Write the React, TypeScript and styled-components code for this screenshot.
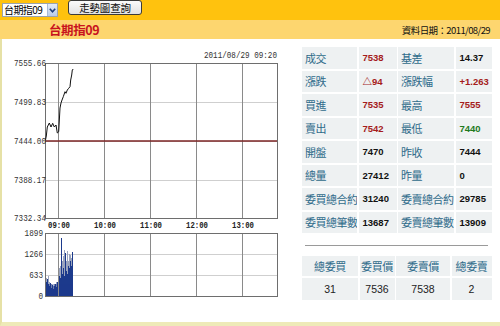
import React from 'react';
import styled, { createGlobalStyle } from 'styled-components';

const GlobalStyle = createGlobalStyle`
  html, body {
    margin: 0;
    padding: 0;
    background: #fff;
  }
  body {
    font-family: 'Noto Sans CJK TC', sans-serif;
  }
`;

const Page = styled.div`
  width: 500px;
  height: 326px;
  overflow: hidden;
  display: flex;
  flex-direction: column;
`;

const TopBar = styled.div`
  height: 20px;
  flex: none;
  background: #ffc20e;
  display: flex;
  align-items: flex-start;
  padding-left: 2px;
  gap: 10px;
`;

const Select = styled.div`
  margin-top: 3px;
  width: 56px;
  height: 14px;
  display: flex;
  align-items: stretch;
  background: #fff;
  border: 1px solid #9aa3ad;
  box-sizing: border-box;
`;

const SelectText = styled.span`
  flex: 1;
  min-width: 0;
  font-family: 'Noto Sans CJK TC', sans-serif;
  font-size: 10px;
  line-height: 12px;
  padding-left: 1px;
  color: #000;
  white-space: nowrap;
  letter-spacing: -0.6px;
`;

const SelectArrow = styled.span`
  width: 9px;
  flex: none;
  display: flex;
  align-items: center;
  justify-content: center;
  background: linear-gradient(#e3ecf8, #b9cbe6);
  border-left: 1px solid #a9b9d3;
`;

const QueryButton = styled.div`
  width: 74px;
  height: 15px;
  box-sizing: border-box;
  border: 1px solid #3b3b3b;
  border-radius: 3px;
  background: linear-gradient(#fbfbfb, #e2e2e2);
  display: flex;
  align-items: center;
  justify-content: center;
  font-size: 10.5px;
  color: #111;
  letter-spacing: -0.2px;
`;

const TitleBar = styled.div`
  height: 19px;
  flex: none;
  background: #fdd66f;
  display: flex;
  align-items: center;
  justify-content: space-between;
`;

const Title = styled.div`
  margin-left: 49px;
  font-size: 12.5px;
  font-weight: 700;
  color: #c8141e;
  letter-spacing: -0.4px;
`;

const DataDate = styled.div`
  margin-right: 10px;
  font-size: 9.5px;
  color: #111;
  letter-spacing: -0.6px;
`;

const Body = styled.div`
  flex: 1;
  display: flex;
  border-left: 2px solid #e6e1a6;
  border-bottom: 4px solid #eeeab8;
`;

const ChartSvg = styled.svg`
  flex: none;
  display: block;
`;

const InfoPanel = styled.div`
  flex: 1;
  padding: 8px 0 0 12px;
  display: flex;
  flex-direction: column;
`;

const QuoteGrid = styled.div`
  width: 190px;
  display: grid;
  grid-template-columns: 55px 38px 56px 36px;
  grid-auto-rows: 21.5px;
  gap: 2px 1.5px;
`;

const Cell = styled.div<{ $tone?: 'label' | 'up' | 'down' | 'flat' }>`
  background: #eef1f2;
  display: flex;
  align-items: center;
  padding-left: ${(p) => (p.$tone === 'label' ? '3px' : '4px')};
  white-space: nowrap;
  overflow: hidden;
  font-family: ${(p) =>
    p.$tone === 'label'
      ? "'Noto Sans CJK TC', sans-serif"
      : "'Liberation Sans', 'Noto Sans CJK TC', sans-serif"};
  font-size: ${(p) => (p.$tone === 'label' ? '11px' : '9.5px')};
  letter-spacing: ${(p) => (p.$tone === 'label' ? '-0.5px' : '0')};
  font-weight: ${(p) => (p.$tone === 'label' ? 400 : 700)};
  color: ${(p) =>
    p.$tone === 'label'
      ? '#2e6b8a'
      : p.$tone === 'up'
      ? '#a51c1c'
      : p.$tone === 'down'
      ? '#1e7a1e'
      : '#111'};
`;

const Divider = styled.div`
  margin: 12px 3px 0;
  width: 183px;
  height: 1px;
  background: #9a9a9a;
`;

const OrderGrid = styled.div`
  margin-top: 10px;
  width: 190px;
  display: grid;
  grid-template-columns: 56px 35px 54px 40px;
  grid-template-rows: 20px 22px;
  gap: 2px 1.5px;
`;

const OrderCell = styled.div<{ $head?: boolean }>`
  background: #eef1f2;
  display: flex;
  align-items: center;
  justify-content: center;
  white-space: nowrap;
  font-family: ${(p) =>
    p.$head ? "'Noto Sans CJK TC', sans-serif" : "'Liberation Sans', sans-serif"};
  font-size: ${(p) => (p.$head ? '11px' : '10.5px')};
  letter-spacing: ${(p) => (p.$head ? '-0.4px' : '0')};
  color: ${(p) => (p.$head ? '#2e6b8a' : '#222')};
`;

type Tone = 'label' | 'up' | 'down' | 'flat';

const quoteRows: [string, string, Tone, string, string, Tone][] = [
  ['成交', '7538', 'up', '基差', '14.37', 'flat'],
  ['漲跌', '△94', 'up', '漲跌幅', '+1.263', 'up'],
  ['買進', '7535', 'up', '最高', '7555', 'up'],
  ['賣出', '7542', 'up', '最低', '7440', 'down'],
  ['開盤', '7470', 'flat', '昨收', '7444', 'flat'],
  ['總量', '27412', 'flat', '昨量', '0', 'flat'],
  ['委買總合約', '31240', 'flat', '委賣總合約', '29785', 'flat'],
  ['委買總筆數', '13687', 'flat', '委賣總筆數', '13909', 'flat'],
];

const orderHeads = ['總委買', '委買價', '委賣價', '總委賣'];
const orderValues = ['31', '7536', '7538', '2'];

// chart geometry in page coordinates
const X0 = 45;
const X1 = 277;
const hours = [
  { x: 58, label: '09:00' },
  { x: 104, label: '10:00' },
  { x: 150, label: '11:00' },
  { x: 196, label: '12:00' },
  { x: 242, label: '13:00' },
];

const priceTicks = [
  { y: 63, label: '7555.66' },
  { y: 102, label: '7499.83' },
  { y: 141, label: '7444.00' },
  { y: 180, label: '7388.17' },
  { y: 218, label: '7332.34' },
];

const volTicks = [
  { y: 233, label: '1899' },
  { y: 254, label: '1266' },
  { y: 275, label: '633' },
  { y: 296, label: '0' },
];

const pricePts = [
  [45.5, 140], [46.3, 136], [47.3, 127], [49.3, 123], [51, 127], [52.7, 123.3],
  [54.3, 127], [56, 125], [57.3, 133], [58.7, 131.7], [60, 108], [61, 103],
  [62, 100], [63.3, 96.7], [65, 91.7], [66, 93.3], [67.3, 90], [68.7, 88.3],
  [70, 86.7], [70.7, 80], [71.7, 75], [72.3, 70], [73.3, 69],
];

// [dark, light] bar heights per pixel column starting at x=45
const volBars = [
  [14, 18], [17, 17], [12, 20], [10, 14], [13, 13], [8, 12], [11, 11], [7, 10],
  [10, 12], [12, 12], [9, 14], [14, 14], [16, 26], [20, 28], [18, 30], [58, 58],
  [22, 35], [28, 40], [20, 46], [43, 43], [25, 35], [22, 45], [30, 35], [28, 42],
  [35, 41], [30, 38], [44, 44],
];

const Chart = () => (
  <ChartSvg width={288} height={283} viewBox="2 39 288 283">
    <text x={277} y={58} fontFamily="'Liberation Mono', monospace" fontSize={8.5} fill="#333"
      textAnchor="end" textLength={73} lengthAdjust="spacingAndGlyphs">
      2011/08/29 09:20
    </text>

    {/* price grid */}
    {priceTicks.slice(1, 4).map((t) => (
      <line key={t.y} x1={X0} x2={X1} y1={t.y + 0.5} y2={t.y + 0.5} stroke="#cfcfcf" />
    ))}
    {hours.map((h) => (
      <line key={h.x} x1={h.x + 0.5} x2={h.x + 0.5} y1={63} y2={218} stroke="#8a8a8a" />
    ))}
    <rect x={X0 + 0.5} y={63.5} width={X1 - X0} height={155} fill="none" stroke="#6e6e6e" />
    <line x1={X0} x2={X1} y1={141} y2={141} stroke="#7d2424" strokeWidth={1.5} />
    <polyline
      points={pricePts.map((p) => p.join(',')).join(' ')}
      fill="none"
      stroke="#111"
      strokeWidth={1}
    />
    {priceTicks.map((t) => (
      <text key={t.label} x={46} y={t.y + 3} fontFamily="'Liberation Mono', monospace" fontSize={9}
        fill="#333" textAnchor="end" textLength={32} lengthAdjust="spacingAndGlyphs">
        {t.label}
      </text>
    ))}
    {hours.map((h) => (
      <text key={h.label} x={h.x + 1} y={228} fontFamily="'Liberation Mono', monospace" fontSize={8.5}
        fontWeight={700} fill="#222" textAnchor="middle" textLength={22} lengthAdjust="spacingAndGlyphs">
        {h.label}
      </text>
    ))}

    {/* volume grid */}
    {volTicks.slice(1, 3).map((t) => (
      <line key={t.y} x1={X0} x2={X1} y1={t.y + 0.5} y2={t.y + 0.5} stroke="#cfcfcf" />
    ))}
    {volBars.map(([d, l], i) => (
      <g key={i}>
        <rect x={X0 + 1 + i} y={296 - l} width={1} height={l} fill="#9aa4bd" />
        <rect x={X0 + 1 + i} y={296 - d} width={1} height={d} fill="#1c3a8c" />
      </g>
    ))}
    <rect x={X0 + 1} y={284} width={27} height={12} fill="#1c3a8c" opacity={0.35} />
    {hours.map((h) => (
      <line key={h.x} x1={h.x + 0.5} x2={h.x + 0.5} y1={233} y2={296} stroke="#8a8a8a" />
    ))}
    <rect x={X0 + 0.5} y={233.5} width={X1 - X0} height={63} fill="none" stroke="#6e6e6e" />
    {volTicks.map((t) => (
      <text key={t.label} x={43} y={t.y + 3} fontFamily="'Liberation Mono', monospace" fontSize={9}
        fill="#333" textAnchor="end" textLength={t.label.length * 4.6} lengthAdjust="spacingAndGlyphs">
        {t.label}
      </text>
    ))}
  </ChartSvg>
);

const App = () => (
  <Page>
    <GlobalStyle />
    <TopBar>
      <Select>
        <SelectText>台期指09</SelectText>
        <SelectArrow>
          <svg width="7" height="5" viewBox="0 0 7 5">
            <path d="M0.8 0.8 L3.5 3.8 L6.2 0.8" fill="none" stroke="#1f3f7a" strokeWidth="1.6" />
          </svg>
        </SelectArrow>
      </Select>
      <QueryButton>走勢圖查詢</QueryButton>
    </TopBar>
    <TitleBar>
      <Title>台期指09</Title>
      <DataDate>資料日期：2011/08/29</DataDate>
    </TitleBar>
    <Body>
      <Chart />
      <InfoPanel>
        <QuoteGrid>
          {quoteRows.map(([l1, v1, t1, l2, v2, t2]) => (
            <React.Fragment key={l1}>
              <Cell $tone="label">{l1}</Cell>
              <Cell $tone={t1}>{v1}</Cell>
              <Cell $tone="label">{l2}</Cell>
              <Cell $tone={t2}>{v2}</Cell>
            </React.Fragment>
          ))}
        </QuoteGrid>
        <Divider />
        <OrderGrid>
          {orderHeads.map((h) => (
            <OrderCell key={h} $head>{h}</OrderCell>
          ))}
          {orderValues.map((v, i) => (
            <OrderCell key={i}>{v}</OrderCell>
          ))}
        </OrderGrid>
      </InfoPanel>
    </Body>
  </Page>
);

export default App;
